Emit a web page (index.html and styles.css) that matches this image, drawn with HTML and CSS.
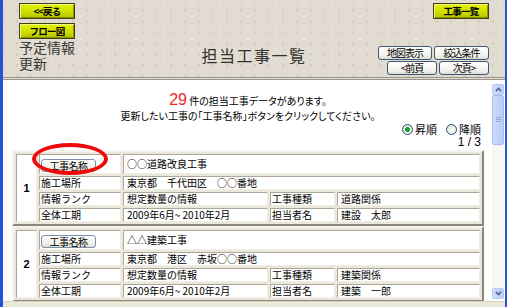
FILE: index.html
```html
<!doctype html>
<html lang="ja">
<head>
  <meta charset="utf-8">
  <title>担当工事一覧</title>
  <link rel="stylesheet" href="styles.css">
</head>
<body>
  <div id="win">
    <div id="head">
      <div class="head_left">
        <a class="ybtn">&lt;&lt;戻る</a>
        <a class="ybtn">フロー図</a>
        <p class="plan">予定情報<br>更新</p>
      </div>
      <h1 class="title">担当工事一覧</h1>
      <div class="head_right">
        <a class="ybtn">工事一覧</a>
        <div class="wrow first">
          <a class="wbtn w54">地図表示</a>
          <a class="wbtn w55">絞込条件</a>
        </div>
        <div class="wrow">
          <a class="wbtn w50">&lt;前頁</a>
          <a class="wbtn w50">次頁&gt;</a>
        </div>
      </div>
    </div>

    <div id="main">
      <div id="content">
        <div class="msg">
          <p class="msg1"><span class="cnt">29</span> 件の担当工事データがあります。</p>
          <p class="msg2">更新したい工事の「工事名称」ボタンをクリックしてください。</p>
        </div>
        <div class="order">
          <span class="radio on"></span><span>昇順</span>
          <span class="radio"></span><span>降順</span>
        </div>
        <div class="page">1 / 3</div>

        <table class="job">
          <colgroup>
            <col class="c_no"><col class="c_lbl"><col class="c_val"><col class="c_lbl2"><col>
          </colgroup>
          <tr class="top">
            <td class="no" rowspan="4">1</td>
            <td class="lbl mark"><a class="nbtn">工事名称</a><span class="ring"></span></td>
            <td colspan="3">○○道路改良工事</td>
          </tr>
          <tr>
            <td class="lbl">施工場所</td>
            <td colspan="3">東京都　千代田区　○○番地</td>
          </tr>
          <tr>
            <td class="lbl">情報ランク</td>
            <td>想定数量の情報</td>
            <td class="lbl">工事種類</td>
            <td>道路関係</td>
          </tr>
          <tr>
            <td class="lbl">全体工期</td>
            <td>2009年6月~ 2010年2月</td>
            <td class="lbl">担当者名</td>
            <td>建設　太郎</td>
          </tr>
        </table>

        <table class="job">
          <colgroup>
            <col class="c_no"><col class="c_lbl"><col class="c_val"><col class="c_lbl2"><col>
          </colgroup>
          <tr class="top">
            <td class="no" rowspan="4">2</td>
            <td class="lbl"><a class="nbtn">工事名称</a></td>
            <td colspan="3">△△建築工事</td>
          </tr>
          <tr>
            <td class="lbl">施工場所</td>
            <td colspan="3">東京都　港区　赤坂○○番地</td>
          </tr>
          <tr>
            <td class="lbl">情報ランク</td>
            <td>想定数量の情報</td>
            <td class="lbl">工事種類</td>
            <td>建築関係</td>
          </tr>
          <tr>
            <td class="lbl">全体工期</td>
            <td>2009年6月~ 2010年2月</td>
            <td class="lbl">担当者名</td>
            <td>建築　一郎</td>
          </tr>
        </table>
      </div>

      <div id="sbar">
        <div class="sb_btn">
          <svg width="7" height="5" viewBox="0 0 7 5"><path d="M0.8 4.2 L3.5 1.4 L6.2 4.2" fill="none" stroke="#4d6185" stroke-width="1.5"/></svg>
        </div>
        <div class="sb_thumb">
          <svg width="5" height="6" viewBox="0 0 5 6"><path d="M0 0.5h5M0 2.5h5M0 4.5h5" stroke="#8fa8df" stroke-width="1"/></svg>
        </div>
        <div class="sb_track"></div>
        <div class="sb_btn">
          <svg width="7" height="5" viewBox="0 0 7 5"><path d="M0.8 0.8 L3.5 3.6 L6.2 0.8" fill="none" stroke="#4d6185" stroke-width="1.5"/></svg>
        </div>
      </div>
    </div>

    <div id="foot"></div>
  </div>
</body>
</html>
```

FILE: styles.css
```css
* {
  margin: 0; padding: 0;
}
html, body {
  width: 100%;
  height: 100%;
  overflow: hidden;
}
body {
  font-family: "Noto Sans CJK JP", "Noto Sans", sans-serif;
  font-size: 11px;
  color: #000;
  background: #ece9d8;
}
#win {
  height: 307px;
  display: flex;
  flex-direction: column;
  border-left: 3px solid #2354d8;
  border-right: 2px solid #2354d8;
}

/* header */
#head {
  height: 77px;
  flex: none;
  display: grid;
  grid-template-columns: 1fr auto 1fr;
  background-color: #e2dbd1;
  background-image: radial-gradient(circle, #efe8cc 0.8px, transparent 1.5px),
                    radial-gradient(circle, #d2c9bd 0.8px, transparent 1.5px);
  background-size: 14px 11px;
  background-position: 0 0, 7px 5px;
  border-bottom: 3px double #9a958a;
}
.head_left {
  padding: 3px 0 0 16px;
}
.ybtn {
  display: block;
  width: 56px;
  height: 16px;
  box-sizing: border-box;
  border: 1px solid #3f4010;
  background: linear-gradient(#e6f200, #cddc00 60%, #b4c000);
  box-shadow: inset 1px 1px 0 #f2f890, inset -1px -1px 0 #8a9200;
  font-size: 9.5px;
  font-weight: bold;
  line-height: 14px;
  text-align: center;
  letter-spacing: -0.8px;
  color: #000;
  margin-bottom: 4px;
}
.ybtn + .ybtn {
  margin-bottom: 0;
}
.plan {
  font-size: 14px;
  line-height: 16px;
  color: #383838;
}
.title {
  font-size: 16px;
  font-weight: normal;
  line-height: 18px;
  letter-spacing: 1.5px;
  color: #303030;
  margin-top: 46px;
  align-self: start;
}
.head_right {
  padding: 3px 16px 0 0;
  display: flex;
  flex-direction: column;
  align-items: flex-end;
}
.wrow {
  display: flex;
  gap: 2px;
  margin-top: 1px;
}
.wrow.first {
  margin-top: 23px;
}
.wbtn {
  display: block;
  height: 14px;
  box-sizing: border-box;
  border: 1px solid #3e5876;
  border-radius: 3px;
  background: linear-gradient(#ffffff, #f2f1ec 70%, #dcdbd4);
  font-size: 10px;
  line-height: 12px;
  letter-spacing: -1px;
  text-align: center;
  color: #000;
}
.w54 { width: 54px; }
.w55 { width: 55px; }
.w50 { width: 50px; }

/* body */
#main {
  flex: 1;
  min-height: 0;
  display: flex;
  background: #fff;
}
#content {
  flex: 1;
  padding: 0 8px 0 9px;
  overflow: hidden;
}
.msg {
  text-align: center;
  padding-top: 11px;
  font-size: 10px;
  font-feature-settings: "palt";
}
.msg1 {
  height: 17px;
  line-height: 17px;
}
.msg2 {
  height: 15px;
  line-height: 15px;
}
.cnt {
  color: #f02828;
  font-size: 16px;
  font-family: "Liberation Sans", sans-serif;
}
.order {
  height: 13px;
  display: flex;
  align-items: center;
  justify-content: flex-end;
  padding-right: 3px;
  line-height: 13px;
}
.radio {
  width: 11px;
  height: 11px;
  box-sizing: border-box;
  border: 1px solid #1c5180;
  border-radius: 50%;
  background: radial-gradient(circle at 60% 60%, #ffffff, #dcdcd2);
  margin: 0 2px 0 9px;
}
.radio.on {
  background: radial-gradient(circle, #21a121 0 2.2px, transparent 2.8px),
              radial-gradient(circle at 60% 60%, #ffffff, #dcdcd2);
}
.page {
  height: 13px;
  text-align: right;
  padding-right: 3px;
  font-size: 12px;
  line-height: 13px;
  font-family: "Liberation Sans", sans-serif;
}

/* job tables */
.job {
  width: 100%;
  table-layout: fixed;
  border-collapse: separate;
  border-spacing: 2px;
  border: 2px solid;
  border-color: #f6f4ec #8a867c #8a867c #f6f4ec;
  background: #ebe7dc;
  margin-top: 1px;
}
.job + .job {
  margin-top: 0;
}
.c_no { width: 21px; }
.c_lbl { width: 82px; }
.c_val { width: 145px; }
.c_lbl2 { width: 65px; }
.job td {
  background: #fff;
  border: 1px solid;
  border-color: #aca899 #f1efe2 #f1efe2 #aca899;
  padding: 0 3px;
  height: 14px;
  box-sizing: border-box;
  font-size: 10px;
  line-height: 12px;
  white-space: nowrap;
  overflow: hidden;
}
.job tr.top td {
  height: 20px;
  line-height: 18px;
}
.job td.lbl {
  padding-left: 1px;
}
.job td.no {
  font-family: "Liberation Sans", sans-serif;
  font-weight: bold;
  font-size: 11px;
  text-align: center;
  padding: 0;
}
.job td.mark {
  position: relative;
  overflow: visible;
}
.nbtn {
  display: inline-block;
  width: 55px;
  height: 13px;
  box-sizing: border-box;
  border: 1px solid #7d8fae;
  border-radius: 3px;
  background: linear-gradient(#ffffff, #f0efea 70%, #dedcd4);
  font-size: 10px;
  line-height: 11px;
  letter-spacing: -0.5px;
  text-align: center;
  vertical-align: middle;
}
/* red annotation ring over the first button */
.ring {
  position: absolute;
  left: -8px;
  top: -12px;
  width: 76px;
  height: 32px;
  box-sizing: border-box;
  border: 4px solid #ee0a0a;
  border-radius: 50%;
}

/* scrollbar */
#sbar {
  width: 12px;
  margin: 4px 1px 2px 0;
  display: flex;
  flex-direction: column;
  background: #f7f7f3;
}
.sb_btn {
  height: 11px;
  box-sizing: border-box;
  border: 1px solid #b7c9f0;
  border-radius: 2px;
  background: linear-gradient(90deg, #d0ddfc, #bccff8);
  display: flex;
  align-items: center;
  justify-content: center;
}
.sb_thumb {
  height: 50px;
  box-sizing: border-box;
  border: 1px solid #a6bcec;
  border-radius: 2px;
  background: linear-gradient(90deg, #cddbfd, #b8ccf7);
  display: flex;
  align-items: center;
  justify-content: center;
}
.sb_track {
  flex: 1;
}
#foot {
  height: 5px;
  flex: none;
  background: #ece9d8;
  border-top: 1px solid #d6d2c4;
}
```
